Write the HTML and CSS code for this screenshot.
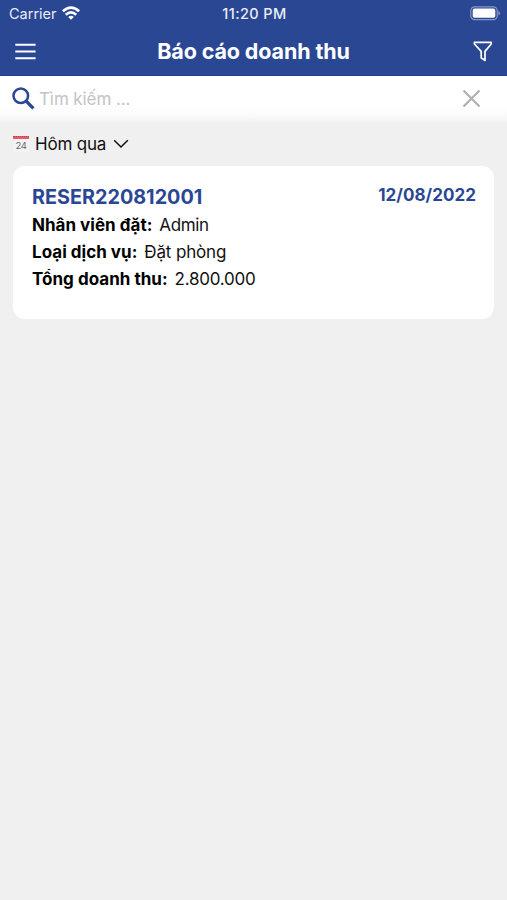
FILE: index.html
```html
<!DOCTYPE html>
<html lang="vi">
<head>
<meta charset="utf-8">
<title>Báo cáo doanh thu</title>
<link rel="stylesheet" href="styles.css">
</head>
<body>
<header class="header">
  <div class="status">
    <div class="carrier"><span>Carrier</span>
      <svg class="wifi" width="18" height="14" viewBox="0 0 18 14"><g fill="none" stroke="#fff" stroke-width="2.7"><path d="M.9 5.3Q9-2.2 17.1 5.3"/><path d="M3.8 8.7Q9 4 14.2 8.7"/></g><path d="M6.2 10.9Q9 8.7 11.8 10.9L9 13.8Z" fill="#fff"/></svg>
    </div>
    <span class="time">11:20 PM</span>
    <svg class="battery" width="31" height="15" viewBox="0 0 31 15"><rect x=".8" y=".8" width="26.4" height="12.8" rx="3.8" fill="none" stroke="#8795c3" stroke-width="1.2"/><rect x="2.7" y="2.6" width="22.6" height="9.2" rx="1.8" fill="#fff"/><path d="M28.4 4.8Q31.6 7.2 28.4 9.6Z" fill="#8795c3"/></svg>
  </div>
  <div class="nav">
    <svg class="menu" width="21" height="17" viewBox="0 0 21 17"><path d="M.3 1.7H20.6M.3 8.6H20.6M.3 15.2H20.6" stroke="#fff" stroke-width="2"/></svg>
    <h1 class="title">Báo cáo doanh thu</h1>
    <svg class="filter" width="20" height="21" viewBox="0 0 20 21"><path d="M1.4 1.3H18.2V3L12 10.4V19.5L8.2 16.8V10.4L1.4 3Z" fill="none" stroke="#fff" stroke-width="1.7" stroke-linejoin="round"/></svg>
  </div>
</header>
<div class="search">
  <svg width="23" height="23" viewBox="0 0 23 23" fill="none" stroke="#2a4794"><circle cx="8.8" cy="8.7" r="7.3" stroke-width="2.5"/><path d="M14.2 14.2L21.4 21.4" stroke-width="3.3"/></svg>
  <span class="placeholder">Tìm kiếm ...</span>
  <svg class="clear" width="19" height="19" viewBox="0 0 19 19"><path d="M1.5 1.5L17.5 17.5M17.5 1.5L1.5 17.5" stroke="#b0b0b0" stroke-width="2.2"/></svg>
</div>
<main>
  <div class="period">
    <div class="calendar"><span class="band"></span><span class="day">24</span></div>
    <span class="period-name">Hôm qua</span>
    <svg width="16" height="10" viewBox="0 0 16 10"><path d="M1.2 1.2L8 8L14.8 1.2" fill="none" stroke="#111" stroke-width="1.5"/></svg>
  </div>
  <article class="card">
    <div class="top"><h2 class="code">RESER220812001</h2><time class="date">12/08/2022</time></div>
    <p class="row"><b>Nhân viên đặt:</b><span class="staff">Admin</span></p>
    <p class="row"><b>Loại dịch vụ:</b><span class="service">Đặt phòng</span></p>
    <p class="row"><b>Tổng doanh thu:</b><span class="amount">2.800.000</span></p>
  </article>
</main>
</body>
</html>
```
FILE: styles.css
```css
* { box-sizing: border-box; margin: 0; padding: 0; }
body { min-height: 900px; background: #f0f0f0; font-family: Inter, "Noto Sans", sans-serif; color: #111; white-space: nowrap; }
svg { display: block; flex: none; }
.header { height: 76px; background: #2a4794; color: #fff; border-bottom: 1px solid #23408f; }
.status { height: 27px; display: grid; grid-template-columns: 1fr auto 1fr; align-items: center; padding: 0 6px 0 9px; font-size: 14.5px; color: #e9ecf6; }
.carrier { display: flex; align-items: center; gap: 5px; }
.wifi { margin-top: -1px; }
.time { font-weight: 500; font-size: 14.5px; letter-spacing: .4px; margin-left: -1px; }
.battery { justify-self: end; }
.nav { height: 48px; display: grid; grid-template-columns: 1fr auto 1fr; align-items: center; padding: 0 15px; }
.title { font-size: 21.5px; line-height: 28px; font-weight: 650; letter-spacing: -.12px; }
.filter { justify-self: end; margin: 1px -1px 0 0; }
.search { height: 46px; display: flex; align-items: center; padding: 0 26px 1px 12px; background: linear-gradient(#fff 65%, #fafafa 88%, #f3f3f3); }
.placeholder { margin-left: 4px; font-size: 17px; letter-spacing: -.1px; color: #c4c4c4; }
.clear { margin-left: auto; }
.period { height: 44px; display: flex; align-items: center; padding-left: 13px; }
.calendar { width: 16px; height: 16px; display: flex; flex-direction: column; align-items: center; background: #f3f3f3; }
.band { width: 16px; height: 4px; background: #ee5967; border-top: 1px dotted #a94b55; }
.day { font-size: 9.5px; line-height: 13px; letter-spacing: -.3px; color: #666; }
.period-name { margin: 0 7px 0 6px; font-size: 17px; letter-spacing: -.2px; }
.card { height: 153px; margin: 0 13px; padding: 17px 18px 0 19px; background: #fff; border-radius: 12px; }
.top { display: flex; justify-content: space-between; height: 29px; color: #2a4794; }
.code { font-size: 19.8px; line-height: 28px; font-weight: 650; }
.date { font-size: 17px; line-height: 24px; font-weight: 650; letter-spacing: .05px; }
.row { display: flex; gap: 7px; height: 27px; line-height: 27px; font-size: 17px; }
.row b { font-weight: 680; color: #000; letter-spacing: .02px; }
.staff { letter-spacing: -.4px; }
.service { letter-spacing: -.15px; }
.amount { letter-spacing: -.25px; }
```
